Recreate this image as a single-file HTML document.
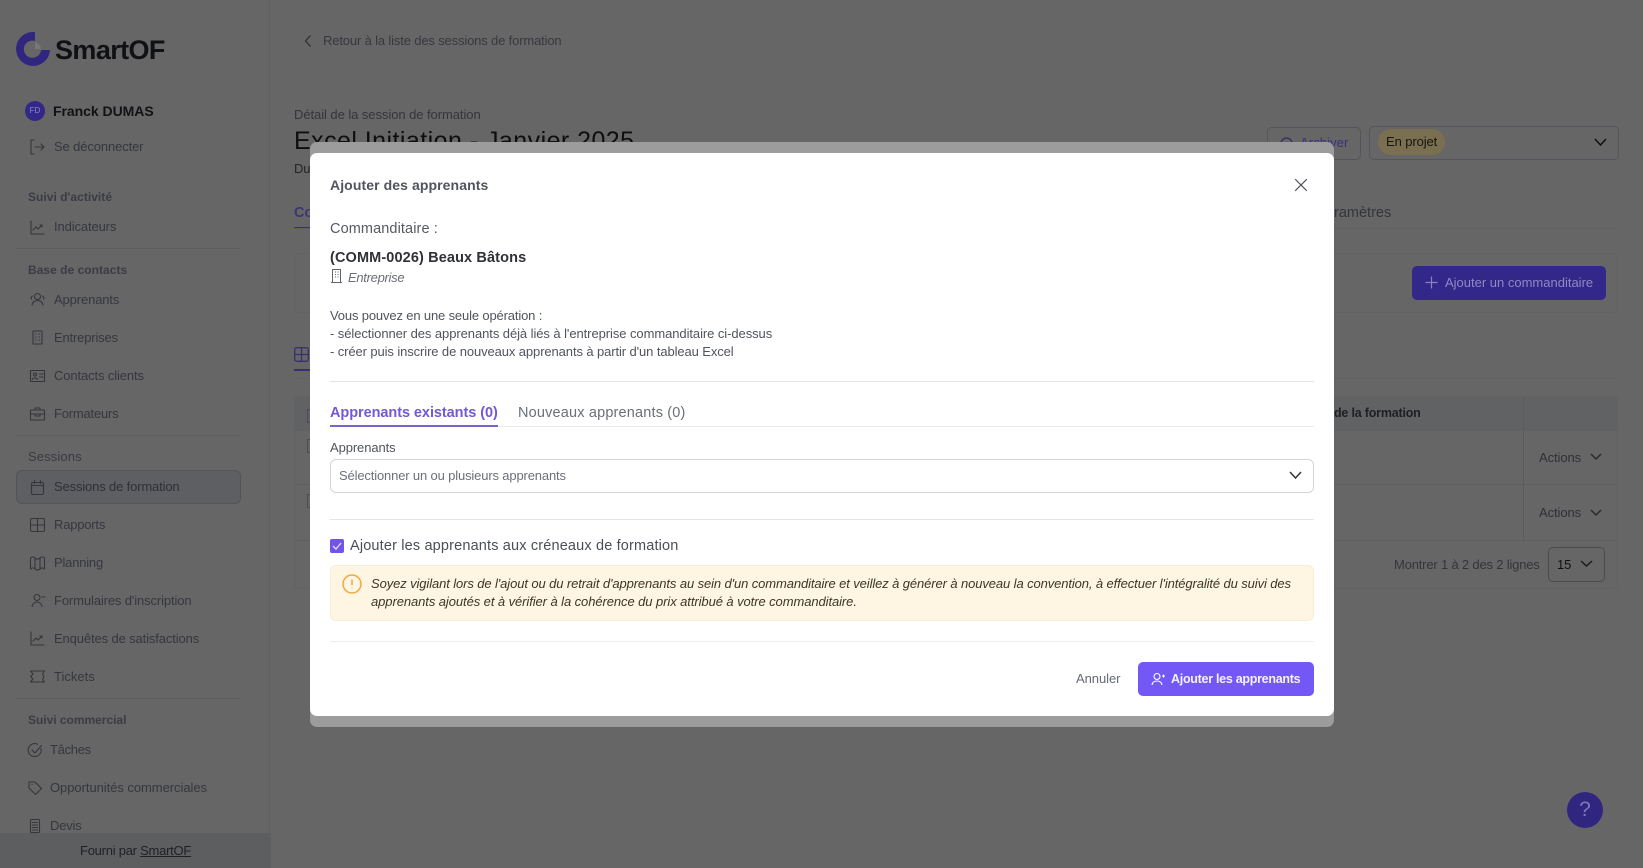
<!DOCTYPE html>
<html lang="fr"><head><meta charset="utf-8"><title>Ajouter des apprenants</title>
<style>
html,body{margin:0;padding:0;width:1643px;height:868px;overflow:hidden;background:#666;font-family:"Liberation Sans",sans-serif;}
#p{position:relative;width:1643px;height:868px;overflow:hidden;background:#666}
.t{position:absolute;white-space:nowrap;line-height:20px;height:20px;font-size:13px;letter-spacing:-.12px;color:#35373e}
.b{position:absolute;box-sizing:border-box}
.h{font-weight:bold;font-size:12px;color:#3b3c45;letter-spacing:.03px}
svg{position:absolute;overflow:visible;fill:none}
.ic{stroke:#35363c;stroke-width:1.1;stroke-linecap:round;stroke-linejoin:round}
.m{color:#50545c}
</style></head><body><div id="p">

<!-- sidebar -->
<div class="b" style="left:269px;top:0;width:1px;height:868px;background:#606060"></div>
<svg style="left:14px;top:30px" width="40" height="40" viewBox="0 0 40 40">
 <path d="M21 2.1A17 17 0 1 0 36 20H27A8.600 8.600 0 1 1 21 11Z" fill="#31267f"/>
 <path d="M21 12A8 8 0 0 1 27 19H21Z" fill="#777"/>
</svg>
<div class="t" style="left:55px;top:38px;font-size:27px;line-height:24px;height:24px;font-weight:bold;color:#101114;letter-spacing:-.6px">SmartOF</div>

<div class="b" style="left:25px;top:101px;width:20px;height:20px;border-radius:50%;background:#33278a;color:#8f88c4;font-size:8px;line-height:20px;text-align:center">FD</div>
<div class="t" style="left:53px;top:101px;font-size:14px;font-weight:bold;color:#111215;letter-spacing:-.04px">Franck DUMAS</div>
<svg class="ic" style="left:30px;top:139px" width="15" height="16" viewBox="0 0 15 16"><path d="M4 1H1v14h3M5 8h9M11 5l3 3-3 3"/></svg>
<div class="t" style="left:54px;top:137px">Se déconnecter</div>

<div class="t h" style="left:28px;top:187px">Suivi d'activité</div>
<svg class="ic" style="left:30px;top:220px" width="15" height="15" viewBox="0 0 15 15"><path d="M1 1v13h13M3 10l3-3 2 2 4-4M10 5h2v2"/></svg>
<div class="t" style="left:54px;top:217px">Indicateurs</div>
<div class="b" style="left:16px;top:248px;width:225px;height:1px;background:#5e5e5e"></div>

<div class="t h" style="left:28px;top:260px">Base de contacts</div>
<svg class="ic" style="left:30px;top:292px" width="15" height="15" viewBox="0 0 15 15"><circle cx="7.500" cy="4.500" r="3"/><path d="M2 13c.5-3 3-4.500 5.500-4.500S12.500 10 13 13M2.500 4a2 2 0 0 0-1 3M12.500 4a2 2 0 0 1 1 3"/></svg>
<div class="t" style="left:54px;top:290px">Apprenants</div>
<svg class="ic" style="left:32px;top:330px" width="11" height="15" viewBox="0 0 11 15"><path d="M1 1h9v13H1zM3.500 4h.5M7 4h.5M3.500 7h.5M7 7h.5M3.500 10h.5M7 10h.5"/></svg>
<div class="t" style="left:54px;top:328px;letter-spacing:-.17px">Entreprises</div>
<svg class="ic" style="left:30px;top:370px" width="15" height="12" viewBox="0 0 15 12"><rect x=".5" y=".5" width="14" height="11"/><circle cx="5" cy="4.500" r="1.500"/><path d="M2.500 9.500c.5-2 4.500-2 5 0M9.500 4H13M9.500 7H13"/></svg>
<div class="t" style="left:54px;top:366px">Contacts clients</div>
<svg class="ic" style="left:30px;top:407px" width="15" height="14" viewBox="0 0 15 14"><rect x=".5" y="3" width="14" height="10" rx="1"/><path d="M5 3V1h5v2M.5 7h14M5 7v2h5V7"/></svg>
<div class="t" style="left:54px;top:404px;letter-spacing:-.2px">Formateurs</div>
<div class="b" style="left:16px;top:435px;width:225px;height:1px;background:#5e5e5e"></div>

<div class="t h" style="left:28px;top:447px;font-weight:normal;font-size:13px;letter-spacing:.12px;color:#393a42">Sessions</div>
<div class="b" style="left:16px;top:470px;width:225px;height:34px;border-radius:6px;background:#5d5f63;border:1px solid #52545a"></div>
<svg class="ic" style="left:31px;top:480px" width="13" height="15" viewBox="0 0 13 15"><rect x=".5" y="2.500" width="12" height="12" rx="1.500"/><path d="M.5 5.500h12M3.500 .5v3M9.500 .5v3"/></svg>
<div class="t" style="left:54px;top:477px;color:#2e3036;letter-spacing:-.15px">Sessions de formation</div>
<svg class="ic" style="left:30px;top:518px" width="15" height="14" viewBox="0 0 15 14"><rect x=".5" y=".5" width="14" height="13" rx="1.500"/><path d="M.5 7h14M7.500 .5v13"/></svg>
<div class="t" style="left:54px;top:515px;letter-spacing:-.2px">Rapports</div>
<svg class="ic" style="left:30px;top:556px" width="15" height="14" viewBox="0 0 15 14"><path d="M.5 2c2-1.500 3-1.500 4.500 0s3 1.500 5 0 3-1.500 4.500 0v11c-1.500-1.500-2.500-1.500-4.500 0s-3.500 1.500-5 0-2.500-1.500-4.500 0zM5 2v11M10 2v11"/></svg>
<div class="t" style="left:54px;top:553px;letter-spacing:-.2px">Planning</div>
<svg class="ic" style="left:30px;top:593px" width="15" height="15" viewBox="0 0 15 15"><circle cx="7" cy="4.500" r="3"/><path d="M2 13.500c.5-3 3-4.500 5-4.500s4.500 1.500 5 4.500M12 4h3"/></svg>
<div class="t" style="left:54px;top:591px">Formulaires d'inscription</div>
<svg class="ic" style="left:30px;top:631px" width="15" height="15" viewBox="0 0 15 15"><path d="M1 1v13h13M3 10l3-3 2 2 4-4M10 5h2v2"/></svg>
<div class="t" style="left:54px;top:629px">Enquêtes de satisfactions</div>
<svg class="ic" style="left:30px;top:670px" width="15" height="13" viewBox="0 0 15 13"><path d="M.5 1h14l-2 3 1.500 2.500-1.500 3 2 2.500H.500l2.500-3L.5 6.500 3 4z"/></svg>
<div class="t" style="left:54px;top:667px;letter-spacing:0">Tickets</div>
<div class="b" style="left:16px;top:698px;width:225px;height:1px;background:#5e5e5e"></div>

<div class="t h" style="left:28px;top:710px;letter-spacing:-.02px">Suivi commercial</div>
<svg class="ic" style="left:28px;top:743px" width="14" height="14" viewBox="0 0 14 14"><path d="M13 5.500A6.500 6.500 0 1 1 9.500 1.200M4 7l3 3 6.500-7.500"/></svg>
<div class="t" style="left:50px;top:740px;letter-spacing:-.3px">Tâches</div>
<svg class="ic" style="left:28px;top:781px" width="14" height="14" viewBox="0 0 14 14"><path d="M1 1h6l6.500 6.500-6 6L1 7zM4 3.500h.2"/></svg>
<div class="t" style="left:50px;top:778px;letter-spacing:-.05px">Opportunités commerciales</div>
<svg class="ic" style="left:30px;top:819px" width="10" height="14" viewBox="0 0 10 14"><rect x=".5" y=".5" width="9" height="13" rx="1"/><path d="M2.500 3.500h5M2.500 6h5M2.500 8.500h5M2.500 11h5"/></svg>
<div class="t" style="left:50px;top:816px;letter-spacing:-.2px">Devis</div>

<div class="b" style="left:0;top:833px;width:271px;height:35px;background:#5c5e60"></div>
<div class="t" style="left:80px;top:841px;color:#202126;letter-spacing:-.25px">Fourni par <span style="text-decoration:underline">SmartOF</span></div>

<!-- main page -->
<svg style="left:303px;top:34px;stroke:#2c2d33;stroke-width:1.200" width="10" height="14" viewBox="0 0 10 14"><path d="M7.500 1.500L2.500 7l5 5.500"/></svg>
<div class="t" style="left:323px;top:31px;color:#37383f;letter-spacing:-.15px">Retour à la liste des sessions de formation</div>
<div class="t" style="left:294px;top:105px;color:#34353b;letter-spacing:-.06px">Détail de la session de formation</div>
<div class="t" style="left:294px;top:126px;font-size:25px;line-height:30px;height:30px;color:#0d0e10;letter-spacing:.45px">Excel Initiation - Janvier 2025</div>
<div class="t" style="left:294px;top:159px;font-size:13px;color:#232429">Du</div>
<div class="t" style="left:294px;top:203px;font-size:14.500px;font-weight:bold;color:#3c3578">Co</div>
<div class="b" style="left:294px;top:227px;width:30px;height:2px;background:#37306f"></div>
<div class="b" style="left:294px;top:228px;width:1324px;height:1px;background:#626262"></div>
<div class="t" style="left:1334px;top:203px;font-size:14.500px;color:#34353b;letter-spacing:0">ramètres</div>

<div class="b" style="left:294px;top:253px;width:1324px;height:60px;border:1px solid #626262;border-radius:4px"></div>
<div class="b" style="left:1412px;top:266px;width:194px;height:34px;border-radius:5px;background:#33278a"></div>
<svg style="left:1425px;top:276px;stroke:#8b84c0;stroke-width:1.200" width="13" height="13" viewBox="0 0 13 13"><path d="M6.500 .5v12M.5 6.500h12"/></svg>
<div class="t" style="left:1445px;top:273px;color:#8f89c4;letter-spacing:0">Ajouter un commanditaire</div>

<div class="b" style="left:1267px;top:127px;width:94px;height:33px;border:1px solid #53555c;border-radius:5px"></div>
<svg style="left:1280px;top:137px;stroke:#2e2a60;stroke-width:1.200" width="13" height="13" viewBox="0 0 13 13"><circle cx="6.500" cy="6.500" r="5.500"/></svg>
<div class="t" style="left:1300px;top:133px;color:#372f80;letter-spacing:.1px">Archiver</div>
<div class="b" style="left:1369px;top:126px;width:250px;height:34px;border:1px solid #53555c;border-radius:5px"></div>
<div class="b" style="left:1378px;top:129px;width:67px;height:26px;border-radius:13px;background:#7b6f52"></div>
<div class="t" style="left:1386px;top:132px;color:#17150f;letter-spacing:-.1px">En projet</div>
<svg style="left:1594px;top:138px;stroke:#111;stroke-width:1.500" width="13" height="8" viewBox="0 0 13 8"><path d="M1 1l5.500 6L12 1"/></svg>

<svg style="left:294px;top:347px;stroke:#37306f;stroke-width:1.300" width="15" height="15" viewBox="0 0 15 15"><rect x=".7" y=".7" width="13.600" height="13.600" rx="2"/><path d="M.7 7.500h13.600M7.500 .7v13.600"/></svg>
<div class="b" style="left:294px;top:369px;width:16px;height:2px;background:#37306f"></div>
<div class="b" style="left:294px;top:378px;width:1324px;height:1px;background:#626262"></div>
<div class="b" style="left:294px;top:396px;width:1324px;height:193px;border:1px solid #626262;border-radius:4px"></div>
<div class="b" style="left:295px;top:397px;width:1322px;height:34px;background:#616264"></div>
<div class="b" style="left:295px;top:484px;width:1322px;height:1px;background:#606060"></div>
<div class="b" style="left:295px;top:540px;width:1322px;height:1px;background:#606060"></div>
<div class="b" style="left:1523px;top:397px;width:1px;height:143px;background:#5c5c5e"></div>
<div class="b" style="left:307px;top:409px;width:7px;height:14px;border:1px solid #4c4d52;border-right:0"></div>
<div class="b" style="left:307px;top:439px;width:7px;height:14px;border:1px solid #4c4d52;border-right:0"></div>
<div class="b" style="left:307px;top:494px;width:7px;height:14px;border:1px solid #4c4d52;border-right:0"></div>
<div class="t" style="left:1334px;top:403px;font-weight:bold;font-size:12.500px;color:#1e1f23;letter-spacing:-.2px">de la formation</div>
<div class="t" style="left:1539px;top:448px;color:#2f3038;letter-spacing:-.08px">Actions</div>
<svg style="left:1590px;top:453px;stroke:#2a2b31;stroke-width:1.500" width="12" height="8" viewBox="0 0 12 8"><path d="M1 1l5 5 5-5"/></svg>
<div class="t" style="left:1539px;top:503px;color:#2f3038;letter-spacing:-.08px">Actions</div>
<svg style="left:1590px;top:509px;stroke:#2a2b31;stroke-width:1.500" width="12" height="8" viewBox="0 0 12 8"><path d="M1 1l5 5 5-5"/></svg>
<div class="t" style="left:1394px;top:555px;color:#34353b;letter-spacing:-.18px">Montrer 1 à 2 des 2 lignes</div>
<div class="b" style="left:1548px;top:547px;width:57px;height:35px;border:1px solid #4a4b50;border-radius:5px"></div>
<div class="t" style="left:1557px;top:555px;color:#101114">15</div>
<svg style="left:1580px;top:560px;stroke:#1a1b1f;stroke-width:1.500" width="13" height="8" viewBox="0 0 13 8"><path d="M1 1l5.500 5L12 1"/></svg>

<div class="b" style="left:1567px;top:792px;width:36px;height:36px;border-radius:50%;background:#31267f;color:#7f78b8;font-size:21px;line-height:36px;text-align:center">?</div>

<!-- modal -->
<div class="b" style="left:310px;top:142px;width:1024px;height:585px;background:#9c9c9c;border-radius:7px"></div>
<div class="b" style="left:310px;top:153px;width:1024px;height:563px;background:#fff;border-radius:7px"></div>

<div class="t m" style="left:330px;top:175px;font-size:14px;font-weight:bold;letter-spacing:.09px">Ajouter des apprenants</div>
<svg style="left:1295px;top:179px;stroke:#4c4f56;stroke-width:1.100" width="12" height="12" viewBox="0 0 12 12"><path d="M.2 .2l11.600 11.600M11.800 .2L.2 11.800"/></svg>

<div class="t m" style="left:330px;top:218px;font-size:14.500px;letter-spacing:.1px;color:#565a62;margin-top:1px">Commanditaire :</div>
<div class="t" style="left:330px;top:247px;font-size:14.500px;font-weight:bold;color:#2f3137;letter-spacing:.12px;margin-top:1px">(COMM-0026) Beaux Bâtons</div>
<svg style="left:331px;top:269px;stroke:#62666e;stroke-width:1" width="11" height="14" viewBox="0 0 11 14"><path d="M1.500 .5h8v13h-8zM0 13.500h11M4 3h1M6.500 3h1M4 5.500h1M6.500 5.500h1M4 8h1M6.500 8h1"/></svg>
<div class="t" style="left:348px;top:268px;font-style:italic;color:#6a6e76;letter-spacing:-.3px">Entreprise</div>

<div class="t m" style="left:330px;top:306px;letter-spacing:-.15px">Vous pouvez en une seule opération :</div>
<div class="t m" style="left:330px;top:324px;letter-spacing:-.07px">- sélectionner des apprenants déjà liés à l'entreprise commanditaire ci-dessus</div>
<div class="t m" style="left:330px;top:342px;letter-spacing:-.1px">- créer puis inscrire de nouveaux apprenants à partir d'un tableau Excel</div>
<div class="b" style="left:330px;top:381px;width:984px;height:1px;background:#e3e4e6"></div>

<div class="t" style="left:330px;top:403px;font-size:14.500px;font-weight:bold;color:#7359d6;letter-spacing:-.06px">Apprenants existants (0)</div>
<div class="t" style="left:518px;top:403px;font-size:14.500px;color:#6b6f78;letter-spacing:.17px">Nouveaux apprenants (0)</div>
<div class="b" style="left:330px;top:426px;width:984px;height:1px;background:#e8e9eb"></div>
<div class="b" style="left:330px;top:425px;width:168px;height:2px;background:#7a62d0"></div>

<div class="t m" style="left:330px;top:438px;letter-spacing:-.1px">Apprenants</div>
<div class="b" style="left:330px;top:459px;width:984px;height:34px;border:1px solid #d4d5d9;border-radius:6px"></div>
<div class="t" style="left:339px;top:466px;color:#6c7079;letter-spacing:-.15px">Sélectionner un ou plusieurs apprenants</div>
<svg style="left:1289px;top:471px;stroke:#33353a;stroke-width:1.500" width="13" height="9" viewBox="0 0 13 9"><path d="M1 1l5.500 6L12 1"/></svg>
<div class="b" style="left:330px;top:519px;width:984px;height:1px;background:#e3e4e6"></div>

<div class="b" style="left:330px;top:539px;width:14px;height:14px;border-radius:2px;background:#7055e8"></div>
<svg style="left:332px;top:542px;stroke:#e4defc;stroke-width:1.300" width="10" height="8" viewBox="0 0 10 8"><path d="M1 4l3 3 5-6"/></svg>
<div class="t" style="left:350px;top:536px;font-size:14.500px;color:#4a4e58;letter-spacing:.16px">Ajouter les apprenants aux créneaux de formation</div>

<div class="b" style="left:330px;top:565px;width:984px;height:56px;background:#fef5e3;border:1px solid #f8eed8;border-radius:6px"></div>
<svg style="left:342px;top:574px;stroke:#eeaa3c;stroke-width:1.500" width="20" height="20" viewBox="0 0 20 20"><circle cx="10" cy="10" r="9"/><path d="M10 5.500v5.500M10 13.800v.5"/></svg>
<div class="t" style="left:371px;top:574px;font-style:italic;color:#3d3626;letter-spacing:-.106px">Soyez vigilant lors de l'ajout ou du retrait d'apprenants au sein d'un commanditaire et veillez à générer à nouveau la convention, à effectuer l'intégralité du suivi des</div>
<div class="t" style="left:371px;top:592px;font-style:italic;color:#3d3626;letter-spacing:-.08px">apprenants ajoutés et à vérifier à la cohérence du prix attribué à votre commanditaire.</div>
<div class="b" style="left:330px;top:641px;width:984px;height:1px;background:#eeeef0"></div>

<div class="t" style="left:1076px;top:669px;color:#666a73;letter-spacing:-.05px">Annuler</div>
<div class="b" style="left:1138px;top:662px;width:176px;height:34px;border-radius:5px;background:#7358f6"></div>
<svg style="left:1151px;top:672px;stroke:#fff;stroke-width:1.100" width="14" height="14" viewBox="0 0 14 14"><circle cx="6" cy="4.500" r="3"/><path d="M1 13c.5-3 3-4 5-4s4.500 1 5 4M11 4h3M12.500 2.500v3"/></svg>
<div class="t" style="left:1171px;top:669px;color:#f4f2ff;font-weight:bold;font-size:12.500px;letter-spacing:-.28px">Ajouter les apprenants</div>

</div></body></html>
